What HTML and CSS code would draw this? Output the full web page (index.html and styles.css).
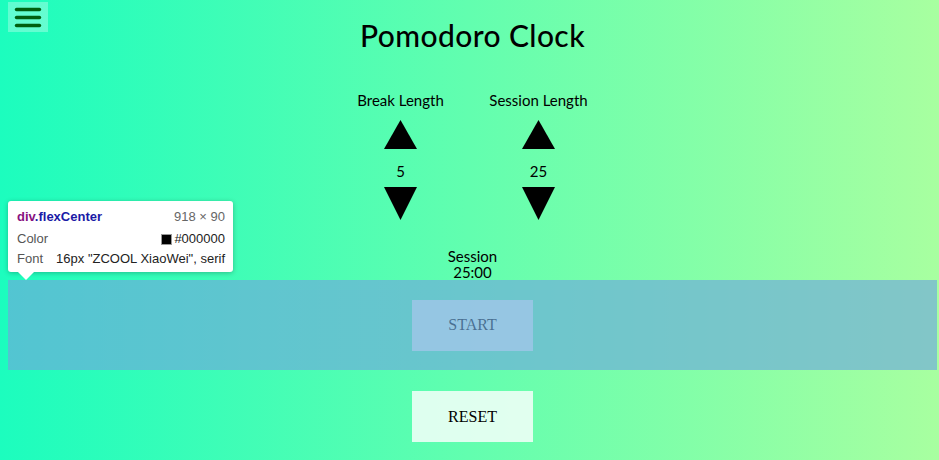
FILE: index.html
```html
<!DOCTYPE html>
<html>
<head>
<meta charset="utf-8">
<title>Pomodoro Clock</title>
<link rel="stylesheet" href="styles.css">
</head>
<body>
<button class="menu-btn" aria-label="menu">
  <svg width="40" height="30" viewBox="0 0 40 30">
    <line x1="8.5" y1="7.5" x2="31.5" y2="7.5" />
    <line x1="8.5" y1="15.5" x2="31.5" y2="15.5" />
    <line x1="8.5" y1="23.5" x2="31.5" y2="23.5" />
  </svg>
</button>
<main class="page">
  <h1 class="title">Pomodoro Clock</h1>
  <section class="lengths">
    <div class="length-col">
      <div class="length-label">Break Length</div>
      <svg class="arrow" width="33" height="29" viewBox="0 0 33 29"><polygon points="16.5,0 33,29 0,29"/></svg>
      <div class="length-value">5</div>
      <svg class="arrow arrow-down" width="33" height="33" viewBox="0 0 33 33"><polygon points="0,0 33,0 16.5,33"/></svg>
    </div>
    <div class="length-col">
      <div class="length-label">Session Length</div>
      <svg class="arrow" width="33" height="29" viewBox="0 0 33 29"><polygon points="16.5,0 33,29 0,29"/></svg>
      <div class="length-value">25</div>
      <svg class="arrow arrow-down" width="33" height="33" viewBox="0 0 33 33"><polygon points="0,0 33,0 16.5,33"/></svg>
    </div>
  </section>
  <div class="display">
    <div class="display-label">Session</div>
    <div class="display-time">25:00</div>
  </div>
  <div class="flexCenter">
    <button class="ctrl-btn">START</button>
    <div class="highlight"></div>
    <div class="tooltip">
      <div class="tip-row tip-head">
        <span><span class="tag">div</span><span class="cls">.flexCenter</span></span>
        <span class="dim">918 × 90</span>
      </div>
      <div class="tip-row">
        <span class="key">Color</span>
        <span class="val"><span class="swatch"></span>#000000</span>
      </div>
      <div class="tip-row">
        <span class="key">Font</span>
        <span class="val">16px "ZCOOL XiaoWei", serif</span>
      </div>
      <div class="tip-arrow"></div>
    </div>
  </div>
  <div class="reset-row">
    <button class="ctrl-btn">RESET</button>
  </div>
</main>
</body>
</html>
```
FILE: styles.css
```css
html {
  height: 100%;
}
body {
  margin: 0;
  min-height: 100%;
  background: linear-gradient(to right, #1cfdbe, #a8ffa0);
  font-family: Lato, "DejaVu Sans", sans-serif;
  color: #000;
  overflow: hidden;
}
.menu-btn {
  position: absolute;
  left: 8px;
  top: 2px;
  width: 40px;
  height: 30px;
  padding: 0;
  border: 0;
  background: rgba(255, 255, 255, 0.3);
  display: block;
}
.menu-btn svg {
  display: block;
}
.menu-btn line {
  stroke: #006010;
  stroke-width: 3.4;
  stroke-linecap: round;
}
.page {
  display: flex;
  flex-direction: column;
}
.title {
  margin: 15px 2px 0 8px;
  font-size: 30px;
  line-height: 40px;
  font-weight: 500;
  text-align: center;
  letter-spacing: 0.4px;
}
.lengths {
  display: flex;
  justify-content: center;
  margin-top: 35px;
}
.length-col {
  width: 138px;
  display: flex;
  flex-direction: column;
  align-items: center;
}
.length-label {
  font-size: 15px;
  line-height: 20px;
  height: 20px;
}
.arrow {
  display: block;
  margin-top: 10px;
}
.length-value {
  font-size: 15px;
  line-height: 20px;
  margin: 12px 0 0;
  height: 20px;
}
.arrow-down {
  margin-top: 6px;
}
.display {
  margin: 28px 2px 0 8px;
  text-align: center;
  font-size: 15px;
  line-height: 16px;
}
.flexCenter {
  position: relative;
  margin: 0 2px 0 8px;
  height: 90px;
  display: flex;
  align-items: center;
  justify-content: center;
}
.ctrl-btn {
  width: 121px;
  height: 51px;
  border: 0;
  padding: 0;
  background: rgba(255, 255, 255, 0.8);
  font-family: "Liberation Serif", serif;
  font-size: 16px;
  color: #000;
}
.highlight {
  position: absolute;
  inset: 0;
  background: rgba(111, 168, 220, 0.66);
}
.tooltip {
  position: absolute;
  left: 0;
  bottom: 98px;
  width: 208px;
  padding: 6px 8px 3px 9px;
  background: #fff;
  border-radius: 3px;
  box-shadow: 0 1px 5px rgba(0, 0, 0, 0.25);
  font-family: "Liberation Sans", Arial, sans-serif;
  font-size: 13px;
  line-height: 20px;
  color: #222;
}
.tip-row {
  display: flex;
  justify-content: space-between;
  align-items: center;
}
.tip-head {
  font-weight: bold;
  margin-bottom: 2px;
}
.tag {
  color: #881280;
}
.cls {
  color: #1a1aa6;
}
.dim {
  font-weight: normal;
  color: #666;
}
.key {
  color: #555;
}
.val {
  display: flex;
  align-items: center;
}
.swatch {
  width: 11px;
  height: 11px;
  background: #000;
  margin-right: 2px;
  border: 1px solid #999;
  box-sizing: border-box;
}
.tip-arrow {
  position: absolute;
  left: 10px;
  bottom: -8px;
  width: 0;
  height: 0;
  border-left: 8px solid transparent;
  border-right: 8px solid transparent;
  border-top: 8px solid #fff;
}
.reset-row {
  margin: 21px 2px 0 8px;
  display: flex;
  justify-content: center;
}
```
